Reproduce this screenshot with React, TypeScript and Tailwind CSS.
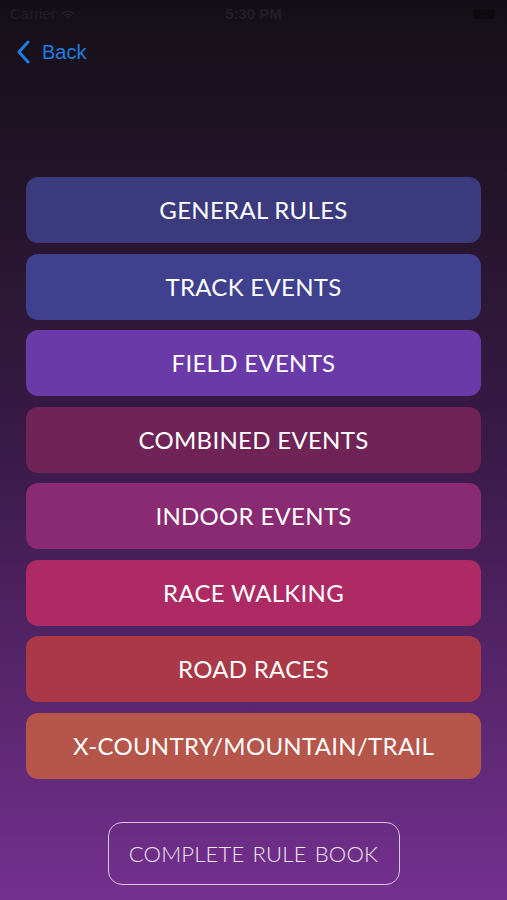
const rules = [
  { label: "GENERAL RULES", color: "bg-[#3b3a7c]" },
  { label: "TRACK EVENTS", color: "bg-[#3f418f]" },
  { label: "FIELD EVENTS", color: "bg-[#6a3aa9]" },
  { label: "COMBINED EVENTS", color: "bg-[#6f2356]" },
  { label: "INDOOR EVENTS", color: "bg-[#8a2a72]" },
  { label: "RACE WALKING", color: "bg-[#ad2a65]" },
  { label: "ROAD RACES", color: "bg-[#aa3847]" },
  { label: "X-COUNTRY/MOUNTAIN/TRAIL", color: "bg-[#b6554a]" },
];

export default function App() {
  return (
    <div className="relative w-[507px] h-[900px] overflow-hidden bg-gradient-to-b from-[#140f16] via-[#3a1a48] to-[#74308f] font-['Lato',sans-serif]">
      {/* Status bar */}
      <div className="grid grid-cols-3 items-center h-[28px] px-[10px] text-[15px] text-[#221d27] font-['Liberation_Sans',sans-serif]">
        <div className="flex items-center gap-1">
          <span>Carrier</span>
          <svg width="16" height="12" viewBox="0 0 16 12" fill="#221d27">
            <path d="M8 11.5 10.2 9a3.2 3.2 0 0 0-4.4 0z" />
            <path d="M3.9 7.2 5 8.4a4.4 4.4 0 0 1 6 0l1.1-1.2a6 6 0 0 0-8.2 0z" />
            <path d="M1.8 5 2.9 6.2a7.4 7.4 0 0 1 10.2 0L14.2 5a9 9 0 0 0-12.4 0z" />
          </svg>
        </div>
        <span className="text-center font-semibold">5:30 PM</span>
        <div className="flex justify-end">
          <div className="w-[22px] h-[10px] rounded-[3px] bg-[#0c0a0e] mr-[2px]" />
        </div>
      </div>

      {/* Nav */}
      <div className="flex items-center h-[48px] px-[16px] text-[#1c7ee0]">
        <svg width="16" height="24" viewBox="0 0 16 24" fill="none" stroke="currentColor" strokeWidth="3" strokeLinecap="round" strokeLinejoin="round">
          <path d="M12 2 3 12l9 10" />
        </svg>
        <span className="ml-[10px] text-[20px] font-['Liberation_Sans',sans-serif]">Back</span>
      </div>

      {/* Rule list */}
      <div className="flex flex-col gap-[10.5px] px-[26px] pt-[101px]">
        {rules.map((r) => (
          <button
            key={r.label}
            className={`h-[66px] rounded-[12px] ${r.color} text-white text-[24px] tracking-[0.3px] flex items-center justify-center`}
          >
            {r.label}
          </button>
        ))}
      </div>

      {/* Complete rule book */}
      <div className="flex justify-center pt-[43px]">
        <button className="w-[292px] h-[63px] rounded-[14px] border border-[#d9c4e6] text-[#efe4f4] text-[22px] font-light tracking-[0.2px] [word-spacing:2px]">
          COMPLETE RULE BOOK
        </button>
      </div>
    </div>
  );
}
